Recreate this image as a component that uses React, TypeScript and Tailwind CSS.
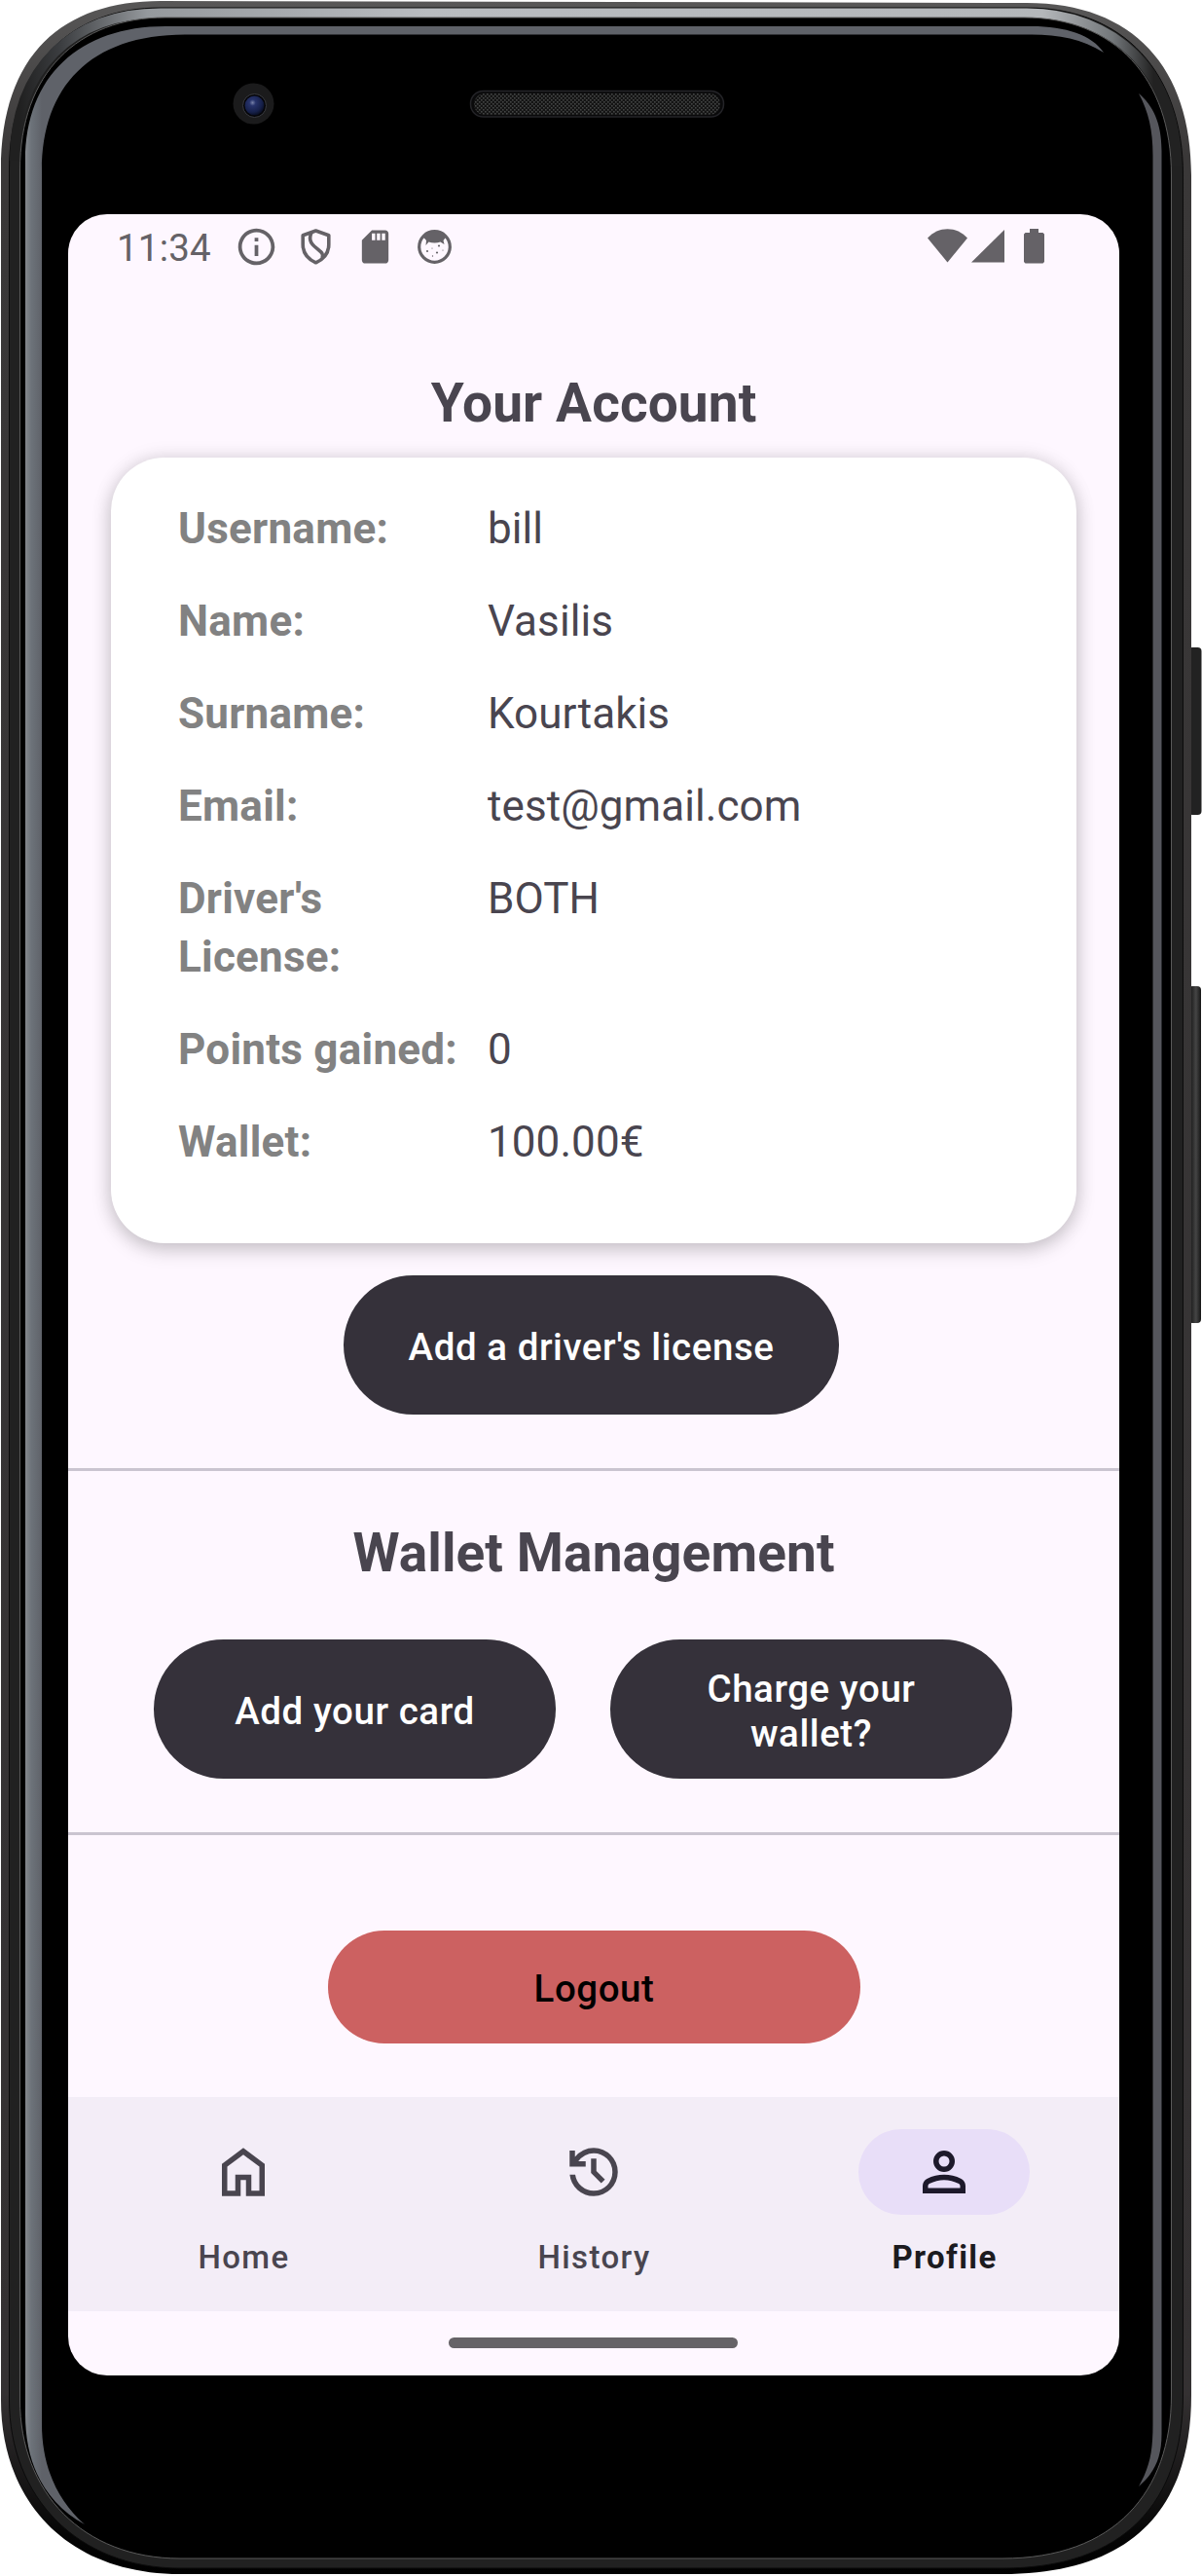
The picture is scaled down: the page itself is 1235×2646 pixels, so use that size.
import type { ReactNode } from "react";

const details = [
  { label: "Username:", value: "bill" },
  { label: "Name:", value: "Vasilis" },
  { label: "Surname:", value: "Kourtakis" },
  { label: "Email:", value: "test@gmail.com" },
  { label: "Driver's License:", value: "BOTH" },
  { label: "Points gained:", value: "0" },
  { label: "Wallet:", value: "100.00€" },
];

/* Phone hardware: body, reflections, side buttons, camera and speaker grille. */
function PhoneBody() {
  return (
    <svg className="absolute inset-0" width="1235" height="2646" viewBox="0 0 1235 2646" fill="none" aria-hidden="true">
      <defs>
        <linearGradient id="rim" x1="0" y1="0" x2="0" y2="1">
          <stop offset="0" stopColor="#585757" />
          <stop offset="0.06" stopColor="#3a3838" />
          <stop offset="0.93" stopColor="#343132" />
          <stop offset="0.985" stopColor="#050505" />
          <stop offset="1" stopColor="#000" />
        </linearGradient>
        <linearGradient id="topGlow" gradientUnits="userSpaceOnUse" x1="20" y1="0" x2="1215" y2="0">
          <stop offset="0" stopColor="#202020" />
          <stop offset="0.035" stopColor="#3b3d40" />
          <stop offset="0.11" stopColor="#95999d" />
          <stop offset="0.35" stopColor="#b9bcc0" />
          <stop offset="0.88" stopColor="#b4b7ba" />
          <stop offset="0.94" stopColor="#73777a" />
          <stop offset="0.975" stopColor="#222" />
          <stop offset="1" stopColor="#222" />
        </linearGradient>
        <linearGradient id="leftGlow" gradientUnits="userSpaceOnUse" x1="26" y1="0" x2="43" y2="0">
          <stop offset="0" stopColor="#84888d" />
          <stop offset="0.35" stopColor="#6d737a" />
          <stop offset="1" stopColor="#5f6269" />
        </linearGradient>
        <linearGradient id="button" x1="0" y1="0" x2="1" y2="0">
          <stop offset="0" stopColor="#0b0b0b" />
          <stop offset="0.6" stopColor="#454545" />
          <stop offset="1" stopColor="#151515" />
        </linearGradient>
        <radialGradient id="lens" cx="0.4" cy="0.35" r="0.65">
          <stop offset="0" stopColor="#7680a8" />
          <stop offset="0.25" stopColor="#27336b" />
          <stop offset="0.75" stopColor="#16204a" />
          <stop offset="1" stopColor="#0a0f24" />
        </radialGradient>
        <pattern id="mesh" width="4" height="4" patternUnits="userSpaceOnUse">
          <rect width="4" height="4" fill="#141414" />
          <rect width="1.6" height="1.6" fill="#444645" />
          <rect x="2" y="2" width="1.6" height="1.6" fill="#444645" />
        </pattern>
      </defs>

      <rect x="1221" y="665" width="13.5" height="172" rx="4" fill="#222" />
      <rect x="1221" y="1013" width="13" height="346" rx="4" fill="url(#button)" />

      <path
        d="M1 175C1 55 65 1 165 1L1055 3C1165 3 1224 70 1224 180V2460C1224 2575 1165 2644 1030 2644H185C70 2644 1 2570 1 2465Z"
        fill="url(#rim)"
      />
      <path
        d="M9.500 175C9.500 65 75 8 165 8H1055C1155 8 1215.500 75 1215.500 180V2460C1215.500 2570 1155 2638 1030 2638H185C80 2638 9.500 2565 9.500 2465Z"
        fill="#212121"
        stroke="#0b0b0b"
      />
      <path d="M15 165C15 70 75 13.500 165 13.500H1055C1145 13.500 1209 75 1209 170" stroke="url(#topGlow)" strokeWidth="10" />
      <path
        d="M20.500 175C20.500 75 80 18 170 18H1052C1145 18 1203.500 80 1203.500 180V2460C1203.500 2560 1145 2628 1030 2628H185C85 2628 20.500 2560 20.500 2465Z"
        fill="#000"
        stroke="#5a5a5a"
        strokeWidth="1"
      />
      <path
        d="M87 2593C45 2570 26 2530 26 2480V165C26 78 82 27 170 27H1060C1095 27 1122 36 1134 54C1112 40 1088 35.500 1060 35.500H190C92 35.500 43 90 43 175V2490C43 2532 58 2568 87 2593Z"
        fill="url(#leftGlow)"
      />
      <path d="M1170 96C1184 108 1193.500 125 1193.500 155V2500C1193.500 2525 1186 2540 1170 2554C1181 2534 1184.500 2520 1184.500 2490V160C1184.500 133 1180 115 1170 96Z" fill="#55565c" />

      <circle cx="260.500" cy="106.500" r="21" fill="#1b1b1c" />
      <circle cx="261.500" cy="108.500" r="12" fill="#050508" stroke="#3a3b40" />
      <circle cx="261.500" cy="108.500" r="10" fill="url(#lens)" />

      <rect x="483.500" y="93.500" width="260" height="26.500" rx="13" fill="#0a0a0b" stroke="#242428" strokeWidth="1.500" />
      <rect x="487" y="96" width="253" height="22" rx="11" fill="url(#mesh)" />
    </svg>
  );
}

function StatusBar() {
  return (
    <div className="flex h-[66px] shrink-0 text-[#656267]">
      <span className="ml-[50px] mt-[12px] w-[97px] text-[38.500px] leading-[46px] tracking-[0.2px]">11:34</span>
      <svg className="ml-[24px] mt-[11px] size-[45px]" viewBox="0 0 24 24" fill="currentColor">
        <path d="M11 7h2v2h-2zm0 4h2v6h-2zm1-9C6.480 2 2 6.480 2 12s4.480 10 10 10 10-4.480 10-10S17.520 2 12 2zm0 18c-4.410 0-8-3.590-8-8s3.590-8 8-8 8 3.590 8 8-3.590 8-8 8z" />
      </svg>
      <svg className="ml-[23px] mt-[15px] h-[37px] w-[31px]" viewBox="0 0 31 37" fill="none" stroke="currentColor" strokeWidth="3.600">
        <path d="M15.500 2L2.200 6.800V16C2.200 25 8 31.500 15.500 34.800C23 31.500 28.800 25 28.800 16V6.800Z" strokeLinejoin="round" />
        <path d="M11 4C8.500 9 9.500 14 14 18L20.500 23.500C23 25.500 23 27.500 22 30" />
      </svg>
      <svg className="ml-[25px] mt-[12.500px] size-[41px]" viewBox="0 0 24 24" fill="currentColor">
        <path d="M18 2h-8L4 8v12c0 1.100.9 2 2 2h12c1.100 0 2-.9 2-2V4c0-1.100-.9-2-2-2zm-6 6h-2V4h2v4zm3 0h-2V4h2v4zm3 0h-2V4h2v4z" />
      </svg>
      <svg className="ml-[23px] mt-[16px] size-[35px]" viewBox="0 0 35 35" fill="currentColor">
        <circle cx="17.500" cy="17.500" r="15.800" fill="none" stroke="currentColor" strokeWidth="3.200" />
        <path d="M5 6.500C10 1 25 1 30 6.500L26.500 11L27.500 15L23.500 12.500C20 13.800 15 13.800 11.500 12.500L8.500 16L9 11Z" />
        <circle cx="10" cy="22" r="1.100" />
        <circle cx="22" cy="16.500" r="1.100" />
        <circle cx="20" cy="23.500" r="1.100" />
        <circle cx="15" cy="19" r=".6" />
        <circle cx="26" cy="21" r=".6" />
        <circle cx="15.500" cy="27" r=".7" />
      </svg>
      <svg className="ml-[489px] mt-[15px] h-[35px] w-[41px]" viewBox="0 0 41 35" fill="currentColor">
        <path d="M0 9.500C11-3 30-3 41 9.500L20.500 34.500Z" />
      </svg>
      <svg className="ml-[4px] mt-[16px] h-[34px] w-[34px]" viewBox="0 0 34 34" fill="currentColor">
        <path d="M34 0V33.500H0Z" />
      </svg>
      <svg className="ml-[20px] mt-[15px] h-[36px] w-[21px]" viewBox="0 0 21 36" fill="currentColor">
        <path d="M6 0H15V4H19.500L21 5.500V34L19.500 35.500H1.500L0 34V5.500L1.500 4H6Z" />
      </svg>
    </div>
  );
}

function DarkButton({ className, children }: { className: string; children: ReactNode }) {
  return (
    <button
      className={
        "flex h-[143px] items-center justify-center rounded-[72px] bg-[#35313a] text-center text-[38.500px] font-medium leading-[46px] tracking-[0.550px] text-white " +
        className
      }
    >
      <span className="pt-[5px]">{children}</span>
    </button>
  );
}

function NavItem({ label, active, path }: { label: string; active?: boolean; path: string }) {
  return (
    <a className={"flex w-[360px] flex-col items-center " + (active ? "text-[#1c1b1f]" : "text-[#49454f]")}>
      <span className={"mt-[33px] flex h-[88px] w-[176px] items-center justify-center rounded-full " + (active ? "bg-[#e8def8] text-[#1d192b]" : "")}>
        <svg className="size-[66px]" viewBox="0 0 24 24" fill="currentColor">
          <path d={path} />
        </svg>
      </span>
      <span className={"mt-[22px] pl-px text-[33px] leading-[44px] tracking-[1.375px] " + (active ? "font-bold" : "font-medium")}>{label}</span>
    </a>
  );
}

export default function App() {
  return (
    <div className="relative h-[2646px] w-[1235px] overflow-hidden bg-white pl-[70px] pt-[220px] font-['Roboto',sans-serif]">
      <PhoneBody />
      <main className="relative flex h-[2220px] w-[1080px] flex-col overflow-hidden rounded-[40px] bg-[#fef7ff] text-[#49454f]">
        <StatusBar />
        <h1 className="mt-[92px] text-center text-[55px] font-bold leading-[72px] tracking-[0.1px]">Your Account</h1>

        <section className="mx-[44px] mt-[20px] h-[807px] shrink-0 rounded-[55px] bg-white pl-[69px] pt-[43px] shadow-[0_7px_20px_rgba(0,0,0,0.18),0_0_20px_rgba(0,0,0,0.1)]">
          <dl className="flex flex-col gap-[35px] text-[44px] leading-[60px]">
            {details.map((d) => (
              <div key={d.label} className="flex">
                <dt className="w-[318px] shrink-0 font-bold tracking-[0.24px] text-[#828282]">
                  <span className="block w-[300px]">{d.label}</span>
                </dt>
                <dd className="tracking-[0.08px]">{d.value}</dd>
              </div>
            ))}
          </dl>
        </section>

        <DarkButton className="mt-[33px] ml-[283px] w-[509px] shrink-0">Add a driver's license</DarkButton>

        <hr className="mt-[55px] h-[3px] shrink-0 border-0 bg-[#cac4d0]" />
        <h2 className="mt-[48px] text-center text-[55px] font-bold leading-[72px] tracking-[0.1px]">Wallet Management</h2>
        <div className="mt-[53px] ml-[88px] flex shrink-0 gap-[56px]">
          <DarkButton className="w-[413px]">Add your card</DarkButton>
          <DarkButton className="w-[413px] px-[66px]">Charge your wallet?</DarkButton>
        </div>
        <hr className="mt-[55px] h-[3px] shrink-0 border-0 bg-[#cac4d0]" />

        <button className="mt-[98px] ml-[267px] flex h-[116px] w-[547px] shrink-0 items-center justify-center rounded-full bg-[#cc6161] pt-[4px] text-[38.500px] font-medium leading-[46px] tracking-[0.550px] text-black">
          Logout
        </button>

        <nav className="mt-[55px] flex h-[220px] shrink-0 bg-[#f3edf7]">
          <NavItem label="Home" path="M6 19h3v-6h6v6h3v-9l-6-4.500L6 10v9Zm-2 2V9l8-6 8 6v12h-7v-6h-2v6H4Z" />
          <NavItem
            label="History"
            path="M12 21q-3.450 0-6.013-2.288T3.050 13H5.100q.35 2.600 2.313 4.300T12 19q2.925 0 4.963-2.037T19 12t-2.037-4.962T12 5q-1.725 0-3.225.8T6.250 8H9v2H3V4h2v2.350q1.275-1.600 3.113-2.475T12 3q1.875 0 3.513.713t2.850 1.924 1.925 2.850T21 12t-.712 3.513-1.925 2.850-2.850 1.925T12 21Zm2.800-4.800L11 12.400V7h2v4.600l3.200 3.200-1.400 1.400Z"
          />
          <NavItem
            label="Profile"
            active
            path="M12 12q-1.650 0-2.825-1.175T8 8t1.175-2.825T12 4t2.825 1.175T16 8t-1.175 2.825T12 12Zm-8 8v-2.800q0-.85.438-1.562T5.600 14.550q1.550-.775 3.150-1.162T12 13t3.250.388 3.150 1.162q.725.375 1.163 1.088T20 17.200V20H4Zm2-2h12v-.8q0-.275-.138-.5T17.500 16.350q-1.350-.675-2.725-1.012T12 15t-2.775.338T6.500 16.350q-.225.125-.362.35T6 17.200v.8Zm6-8q.825 0 1.413-.587T14 8t-.587-1.412T12 6t-1.412.588T10 8t.588 1.413T12 10Z"
          />
        </nav>
        <div className="mt-[27px] mr-px h-[11px] w-[297px] self-center rounded-full bg-[#666367]" />
      </main>
    </div>
  );
}
